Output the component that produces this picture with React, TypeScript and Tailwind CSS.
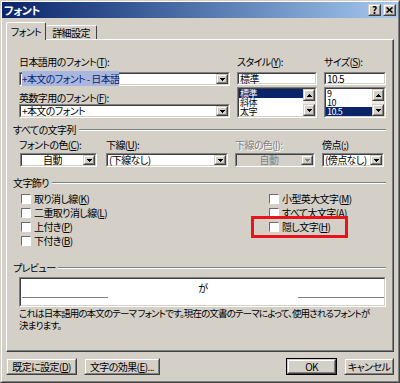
import React from 'react';

const sunkenOuter = 'border border-t-[#808080] border-l-[#808080] border-r-white border-b-white';
const sunkenInner = 'border border-t-[#404040] border-l-[#404040] border-r-[#d4d0c8] border-b-[#d4d0c8]';
const raisedOuter = 'border border-t-[#d4d0c8] border-l-[#d4d0c8] border-r-[#404040] border-b-[#404040]';
const raisedInner = 'border border-t-white border-l-white border-r-[#808080] border-b-[#808080]';

const U = ({ c }: { c: string }) => <span className="underline underline-offset-[1px]">{c}</span>;

const Arrow = ({ up = false, disabled = false }: { up?: boolean; disabled?: boolean }) => (
  <svg width="5" height="3" viewBox="0 0 5 3" shapeRendering="crispEdges">
    <path d={up ? 'M2.5 0L5 3H0Z' : 'M0 0H5L2.5 3Z'} fill={disabled ? '#808080' : '#000'} />
  </svg>
);

const Btn3D = ({ className = '', children }: { className?: string; children?: React.ReactNode }) => (
  <div className={`${raisedOuter} bg-[#d4d0c8] ${className}`}>
    <div className={`${raisedInner} h-full w-full flex items-center justify-center`}>{children}</div>
  </div>
);

const Edit = ({
  className = '',
  disabled = false,
  children,
}: {
  className?: string;
  disabled?: boolean;
  children?: React.ReactNode;
}) => (
  <div className={`${sunkenOuter} ${className}`}>
    <div className={`${sunkenInner} h-full w-full flex items-center ${disabled ? 'bg-[#d4d0c8]' : 'bg-white'}`}>
      {children}
    </div>
  </div>
);

const Select = ({
  children,
  center = false,
  disabled = false,
}: {
  children: React.ReactNode;
  center?: boolean;
  disabled?: boolean;
}) => (
  <Edit className="h-[14px]" disabled={disabled}>
    <div
      className={`flex-1 min-w-0 px-[1px] leading-[10px] whitespace-nowrap ${
        center ? 'text-center' : ''
      } ${disabled ? 'text-[#808080]' : ''}`}
    >
      {children}
    </div>
    <Btn3D className="w-[12px] h-full shrink-0">
      <Arrow disabled={disabled} />
    </Btn3D>
  </Edit>
);

const ListBox = ({ items, selected }: { items: string[]; selected: string }) => (
  <div className={`${sunkenOuter} h-[31px] mt-[2px]`}>
    <div className={`${sunkenInner} h-full flex bg-white`}>
      <div className="flex-1 min-w-0 overflow-hidden text-[9px]">
        {items.map((it) => (
          <div
            key={it}
            className={`h-[9px] leading-[9px] px-[1px] ${it === selected ? 'bg-[#0a246a] text-white' : ''}`}
          >
            {it}
          </div>
        ))}
      </div>
      <div className="w-[12px] flex flex-col">
        <Btn3D className="h-[12px]">
          <Arrow up />
        </Btn3D>
        <div className="flex-1 bg-[#ebe9e5]" />
        <Btn3D className="h-[12px]">
          <Arrow />
        </Btn3D>
      </div>
    </div>
  </div>
);

const Group = ({ title }: { title: string }) => (
  <div className="flex items-center h-[12px]">
    <span className="whitespace-nowrap">{title}</span>
    <div className="flex-1 ml-[3px] border-t border-t-[#808080] border-b border-b-white" />
  </div>
);

const Check = ({ children }: { children: React.ReactNode }) => (
  <div className="flex items-center h-[14px]">
    <div className="w-[10px] h-[10px] shrink-0 border border-t-[#6b6b6b] border-l-[#6b6b6b] border-r-white border-b-white bg-white" />
    <span className="ml-[3px] whitespace-nowrap">{children}</span>
  </div>
);

export default function App() {
  return (
    <div
      className={`w-[400px] h-[383px] font-['Noto_Sans_CJK_JP',sans-serif] text-[10px] leading-[12px] tracking-[-0.6px] [font-feature-settings:'palt'] text-black bg-[#d4d0c8] ${raisedOuter}`}
    >
      <div className={`${raisedInner} h-full w-full flex flex-col`}>
        {/* タイトルバー */}
        <div className="h-[16px] flex items-center justify-between pl-[2px] pr-[2px] bg-linear-to-r from-[#0a246a] to-[#a6caf0]">
          <span className="text-white font-bold text-[11px]">フォント</span>
          <div className="flex gap-[2px]">
            <Btn3D className="w-[13px] h-[12px]">
              <span className="font-bold text-[10px] leading-[10px] tracking-normal">?</span>
            </Btn3D>
            <Btn3D className="w-[13px] h-[12px]">
              <svg width="7" height="6" viewBox="0 0 7 6">
                <path d="M0.5 0.5L6.5 5.5M6.5 0.5L0.5 5.5" stroke="#000" strokeWidth="1.6" />
              </svg>
            </Btn3D>
          </div>
        </div>

        {/* タブ */}
        <div className="mt-[4px] h-[17px] flex items-end pl-[4px]">
          <div className="relative z-10 -mb-px h-[18px] w-[40px] flex items-center justify-center bg-[#d4d0c8] border-t border-l border-r border-t-white border-l-white border-r-[#404040] rounded-t-[2px]">
            フォント
          </div>
          <div className="h-[14px] w-[51px] flex items-center justify-center border-t border-r border-t-white border-r-[#404040] rounded-t-[2px]">
            詳細設定
          </div>
        </div>

        {/* タブパネル */}
        <div className="mx-[4px] h-[313px] border border-t-white border-l-white border-r-[#404040] border-b-[#404040]">
          <div className="h-full border-r border-b border-r-[#808080] border-b-[#808080] px-[6px] flex flex-col">
            <div className="mt-[16px] pl-[6px] flex gap-[7px]">
              <div className="w-[211px] flex flex-col">
                <div>
                  日本語用のフォント(<U c="T" />):
                </div>
                <div className="mt-[4px]">
                  <Edit className="h-[14px]">
                    <div className="flex-1 min-w-0 leading-[10px] whitespace-nowrap px-[1px]">
                      <span className="bg-[#a9b7e0] text-[#0a246a]">+本文のフォント - 日本語</span>
                    </div>
                    <Btn3D className="w-[12px] h-full shrink-0">
                      <Arrow />
                    </Btn3D>
                  </Edit>
                </div>
                <div className="mt-[6px]">
                  英数字用のフォント(<U c="F" />):
                </div>
                <Select>+本文のフォント</Select>
              </div>
              <div className="w-[80px] flex flex-col">
                <div>
                  スタイル(<U c="Y" />):
                </div>
                <Edit className="h-[13px] mt-[4px]">
                  <span className="px-[1px] leading-[10px]">標準</span>
                </Edit>
                <ListBox items={['標準', '斜体', '太字']} selected="標準" />
              </div>
              <div className="w-[62px] flex flex-col">
                <div>
                  サイズ(<U c="S" />):
                </div>
                <Edit className="h-[13px] mt-[4px]">
                  <span className="px-[1px] leading-[10px]">10.5</span>
                </Edit>
                <ListBox items={['9', '10', '10.5']} selected="10.5" />
              </div>
            </div>

            <div className="mt-[6px]">
              <Group title="すべての文字列" />
            </div>
            <div className="mt-[3px] pl-[6px] grid grid-cols-[78px_124px_80px_62px] gap-x-[7px]">
              <div>
                フォントの色(<U c="C" />):
              </div>
              <div className="pl-[2px]">
                下線(<U c="U" />):
              </div>
              <div className="text-[#808080] [text-shadow:1px_1px_0_#fff]">
                下線の色(<U c="I" />):
              </div>
              <div>
                傍点(<U c=";" />)
              </div>
              <div className="mt-[2px] pl-[1px]">
                <Select center>自動</Select>
              </div>
              <div className="mt-[2px] pl-[2px]">
                <Select>(下線なし)</Select>
              </div>
              <div className="mt-[2px]">
                <Select center disabled>
                  自動
                </Select>
              </div>
              <div className="mt-[2px]">
                <Select>(傍点なし)</Select>
              </div>
            </div>

            <div className="mt-[10px]">
              <Group title="文字飾り" />
            </div>
            <div className="mt-[3px] pl-[8px] flex">
              <div className="w-[248px] flex flex-col">
                <Check>
                  取り消し線(<U c="K" />)
                </Check>
                <Check>
                  二重取り消し線(<U c="L" />)
                </Check>
                <Check>
                  上付き(<U c="P" />)
                </Check>
                <Check>
                  下付き(<U c="B" />)
                </Check>
              </div>
              <div className="flex flex-col">
                <Check>
                  小型英大文字(<U c="M" />)
                </Check>
                <Check>
                  すべて大文字(<U c="A" />)
                </Check>
                <div className="relative">
                  <Check>
                    隠し文字(<U c="H" />)
                  </Check>
                  <div className="absolute -left-[18px] -top-[4px] w-[97px] h-[22px] border-[3px] border-[#e8131b]" />
                </div>
              </div>
            </div>

            <div className="mt-[14px]">
              <Group title="プレビュー" />
            </div>
            <div className="mt-[3px] ml-[6px]">
              <Edit className="h-[30px]">
                <div className="h-full w-full flex items-start">
                  <div className="mt-[18px] ml-[1px] w-[86px] h-px bg-[#808080]" />
                  <div className="flex-1 text-center mt-[3px]">が</div>
                  <div className="mt-[18px] w-[86px] h-px bg-[#808080]" />
                </div>
              </Edit>
            </div>
            <div className="pl-[6px] whitespace-nowrap text-[9.5px] tracking-[-0.85px]">
              これは日本語用の本文のテーマ フォントです。現在の文書のテーマによって、使用されるフォントが
              <br />
              決まります。
            </div>
          </div>
        </div>

        {/* ボタン */}
        <div className="mt-[6px] h-[17px] px-[4px] flex">
          <Btn3D className="w-[71px] h-full">
            既定に設定(<U c="D" />)
          </Btn3D>
          <Btn3D className="ml-[7px] w-[76px] h-full">
            文字の効果(<U c="E" />)...
          </Btn3D>
          <div className="flex-1" />
          <div className="w-[51px] h-full border border-black">
            <Btn3D className="h-full">OK</Btn3D>
          </div>
          <Btn3D className="ml-[7px] w-[50px] h-full">キャンセル</Btn3D>
        </div>
      </div>
    </div>
  );
}
